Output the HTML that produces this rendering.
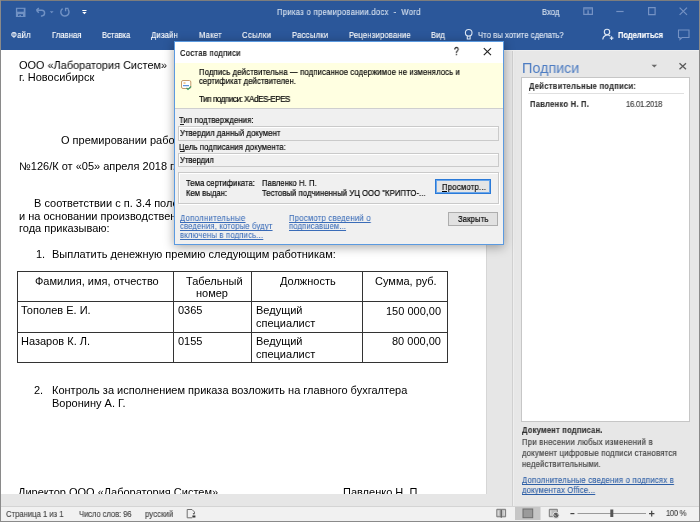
<!DOCTYPE html>
<html><head><meta charset="utf-8"><style>
html,body{margin:0;padding:0;width:700px;height:522px;overflow:hidden;position:relative;font-family:"Liberation Sans",sans-serif;-webkit-font-smoothing:antialiased;}
.t{will-change:transform;}
body div{position:absolute;}
.t{white-space:nowrap;transform-origin:0 50%;}
</style></head><body>
<div style="left:0px;top:0px;width:700px;height:522px;background:#e6e6e6"></div>
<div style="left:0px;top:0px;width:700px;height:50px;background:#2b579a"></div>
<div style="left:0px;top:0px;width:700px;height:1px;background:#7d7d7d"></div>
<div style="left:0px;top:0px;width:1px;height:522px;background:#8a8a8a"></div>
<div style="left:699px;top:0px;width:1px;height:522px;background:#8a8a8a"></div>
<div style="left:1px;top:50px;width:485px;height:444px;background:#fff"></div>
<div style="left:486px;top:50px;width:1px;height:444px;background:#d6d6d6"></div>
<div style="left:512px;top:50px;width:187px;height:456px;background:#e7e7e7"></div>
<div style="left:513px;top:50px;width:1px;height:456px;background:#eeeeee"></div>
<div style="left:512px;top:50px;width:1px;height:456px;background:#d0d0d0"></div>
<div style="left:487px;top:50px;width:212px;height:1px;background:#efefef"></div>
<div style="left:1px;top:506px;width:698px;height:15px;background:#f1f1f1"></div>
<div style="left:1px;top:506px;width:698px;height:1px;background:#d4d4d4"></div>
<div style="left:0px;top:521px;width:700px;height:1px;background:#8a8a8a"></div>
<div style="left:0px;top:520.5px;width:700px;height:1px;background:rgba(138,138,138,0.4)"></div>
<div class="t" style="left:277.3px;top:6.88px;font-size:9px;line-height:11px;color:#d6e0ee;letter-spacing:0.363px;transform:scaleX(0.8500);white-space:pre;-webkit-text-stroke:0.130px #d6e0ee;">Приказ о премировании.docx  -  Word</div>
<div class="t" style="left:541.7px;top:6.68px;font-size:9px;line-height:11px;color:#d6e0ee;letter-spacing:0.028px;transform:scaleX(0.8500);-webkit-text-stroke:0.130px #d6e0ee;">Вход</div>
<div class="t" style="left:11.1px;top:30.08px;font-size:9px;line-height:11px;color:#fff;letter-spacing:0.292px;transform:scaleX(0.8500);-webkit-text-stroke:0.156px #fff;">Файл</div>
<div class="t" style="left:51.9px;top:30.08px;font-size:9px;line-height:11px;color:#fff;letter-spacing:0.064px;transform:scaleX(0.8500);-webkit-text-stroke:0.156px #fff;">Главная</div>
<div class="t" style="left:102.1px;top:30.08px;font-size:9px;line-height:11px;color:#fff;letter-spacing:-0.039px;transform:scaleX(0.8500);-webkit-text-stroke:0.156px #fff;">Вставка</div>
<div class="t" style="left:150.9px;top:30.08px;font-size:9px;line-height:11px;color:#fff;letter-spacing:0.252px;transform:scaleX(0.8500);-webkit-text-stroke:0.156px #fff;">Дизайн</div>
<div class="t" style="left:198.7px;top:30.08px;font-size:9px;line-height:11px;color:#fff;letter-spacing:0.270px;transform:scaleX(0.8500);-webkit-text-stroke:0.156px #fff;">Макет</div>
<div class="t" style="left:242px;top:30.08px;font-size:9px;line-height:11px;color:#fff;letter-spacing:0.445px;transform:scaleX(0.8500);-webkit-text-stroke:0.156px #fff;">Ссылки</div>
<div class="t" style="left:291.7px;top:30.08px;font-size:9px;line-height:11px;color:#fff;letter-spacing:0.304px;transform:scaleX(0.8500);-webkit-text-stroke:0.156px #fff;">Рассылки</div>
<div class="t" style="left:349.3px;top:30.08px;font-size:9px;line-height:11px;color:#fff;letter-spacing:0.229px;transform:scaleX(0.8500);-webkit-text-stroke:0.156px #fff;">Рецензирование</div>
<div class="t" style="left:431.4px;top:30.08px;font-size:9px;line-height:11px;color:#fff;letter-spacing:-0.016px;transform:scaleX(0.8500);-webkit-text-stroke:0.156px #fff;">Вид</div>
<div class="t" style="left:477.5px;top:30.08px;font-size:9px;line-height:11px;color:#e0e8f4;letter-spacing:0.066px;transform:scaleX(0.8500);-webkit-text-stroke:0.156px #e0e8f4;">Что вы хотите сделать?</div>
<div class="t" style="left:617.9px;top:29.78px;font-size:9px;line-height:11px;color:#fff;font-weight:bold;letter-spacing:-0.119px;transform:scaleX(0.8500);-webkit-text-stroke:0.130px #fff;">Поделиться</div>
<div class="t" style="left:18.5px;top:58.99px;font-size:11px;line-height:13px;color:#000;transform:scaleX(0.9920);">ООО «Лаборатория Систем»</div>
<div class="t" style="left:18.5px;top:71.29px;font-size:11px;line-height:13px;color:#000;">г. Новосибирск</div>
<div class="t" style="left:61px;top:134.09px;font-size:11px;line-height:13px;color:#000;">О премировании работников</div>
<div class="t" style="left:18.5px;top:159.69px;font-size:11px;line-height:13px;color:#000;">№126/К от «05» апреля 2018 г.</div>
<div class="t" style="left:34.3px;top:197.29px;font-size:11px;line-height:13px;color:#000;">В соответствии с п. 3.4 положения о премировании</div>
<div class="t" style="left:18.5px;top:209.89px;font-size:11px;line-height:13px;color:#000;">и на основании производственных показателей за март 2018</div>
<div class="t" style="left:18.5px;top:221.99px;font-size:11px;line-height:13px;color:#000;">года приказываю:</div>
<div class="t" style="left:35.6px;top:247.69px;font-size:11px;line-height:13px;color:#000;">1.</div>
<div class="t" style="left:52px;top:247.69px;font-size:11px;line-height:13px;color:#000;">Выплатить денежную премию следующим работникам:</div>
<div style="left:17px;top:271px;width:431px;height:92px;border:1px solid #333;box-sizing:border-box"></div>
<div style="left:173px;top:271px;width:1px;height:92px;background:#333"></div>
<div style="left:251px;top:271px;width:1px;height:92px;background:#333"></div>
<div style="left:362px;top:271px;width:1px;height:92px;background:#333"></div>
<div style="left:17px;top:301px;width:431px;height:1px;background:#333"></div>
<div style="left:17px;top:332px;width:431px;height:1px;background:#333"></div>
<div class="t" style="left:34.6px;top:274.79px;font-size:11px;line-height:13px;color:#000;">Фамилия, имя, отчество</div>
<div class="t" style="left:185.7px;top:274.79px;font-size:11px;line-height:13px;color:#000;">Табельный</div>
<div class="t" style="left:196px;top:287.19px;font-size:11px;line-height:13px;color:#000;">номер</div>
<div class="t" style="left:279.8px;top:274.79px;font-size:11px;line-height:13px;color:#000;">Должность</div>
<div class="t" style="left:375px;top:274.79px;font-size:11px;line-height:13px;color:#000;">Сумма, руб.</div>
<div class="t" style="left:20.8px;top:303.69px;font-size:11px;line-height:13px;color:#000;">Тополев Е. И.</div>
<div class="t" style="left:177.6px;top:303.69px;font-size:11px;line-height:13px;color:#000;">0365</div>
<div class="t" style="left:255.7px;top:303.69px;font-size:11px;line-height:13px;color:#000;">Ведущий</div>
<div class="t" style="left:255.7px;top:316.69px;font-size:11px;line-height:13px;color:#000;">специалист</div>
<div class="t" style="right:258.7px;top:305.39px;font-size:11px;line-height:12px">150 000,00</div>
<div class="t" style="left:20.8px;top:334.89px;font-size:11px;line-height:13px;color:#000;">Назаров К. Л.</div>
<div class="t" style="left:177.6px;top:334.89px;font-size:11px;line-height:13px;color:#000;">0155</div>
<div class="t" style="left:255.7px;top:334.89px;font-size:11px;line-height:13px;color:#000;">Ведущий</div>
<div class="t" style="left:255.7px;top:347.69px;font-size:11px;line-height:13px;color:#000;">специалист</div>
<div class="t" style="right:258.7px;top:335.19px;font-size:11px;line-height:12px">80 000,00</div>
<div class="t" style="left:34.4px;top:384.29px;font-size:11px;line-height:13px;color:#000;">2.</div>
<div class="t" style="left:51.6px;top:384.29px;font-size:11px;line-height:13px;color:#000;">Контроль за исполнением приказа возложить на главного бухгалтера</div>
<div class="t" style="left:51.6px;top:396.79px;font-size:11px;line-height:13px;color:#000;">Воронину А. Г.</div>
<div style="left:1px;top:480px;width:485px;height:14px;overflow:hidden">
<div class="t" style="left:16.6px;top:6.39px;font-size:11px;line-height:13px;color:#000;">Директор ООО «Лаборатория Систем»</div>
<div class="t" style="left:341.8px;top:6.39px;font-size:11px;line-height:13px;color:#000;">Павленко Н. П.</div>
</div>
<div class="t" style="left:522.3px;top:60.48px;font-size:14.5px;line-height:17px;color:#4d7cc2;transform:scaleX(0.9891);">Подписи</div>
<div style="left:521px;top:77px;width:169px;height:345px;background:#fff;border:1px solid #c6c6c6;box-sizing:border-box"></div>
<div class="t" style="left:528.7px;top:80.58px;font-size:9px;line-height:11px;color:#333;font-weight:bold;letter-spacing:0.272px;transform:scaleX(0.8500);-webkit-text-stroke:0.130px #333;">Действительные подписи:</div>
<div style="left:528px;top:93px;width:156px;height:1px;background:#e0e0e0"></div>
<div class="t" style="left:529.5px;top:98.68px;font-size:9px;line-height:11px;color:#333;font-weight:bold;letter-spacing:0.259px;transform:scaleX(0.8500);-webkit-text-stroke:0.130px #333;">Павленко Н. П.</div>
<div class="t" style="left:626.2px;top:98.68px;font-size:9px;line-height:11px;color:#444;letter-spacing:-0.246px;transform:scaleX(0.8500);-webkit-text-stroke:0.195px #444;">16.01.2018</div>
<div class="t" style="left:522.2px;top:424.68px;font-size:9px;line-height:11px;color:#333;font-weight:bold;letter-spacing:0.214px;transform:scaleX(0.8500);-webkit-text-stroke:0.130px #333;">Документ подписан.</div>
<div class="t" style="left:522.2px;top:437.48px;font-size:9px;line-height:11px;color:#444;letter-spacing:0.336px;transform:scaleX(0.8500);-webkit-text-stroke:0.195px #444;">При внесении любых изменений в</div>
<div class="t" style="left:522.2px;top:447.78px;font-size:9px;line-height:11px;color:#444;letter-spacing:0.305px;transform:scaleX(0.8500);-webkit-text-stroke:0.195px #444;">документ цифровые подписи становятся</div>
<div class="t" style="left:522.2px;top:458.68px;font-size:9px;line-height:11px;color:#444;letter-spacing:0.312px;transform:scaleX(0.8500);-webkit-text-stroke:0.195px #444;">недействительными.</div>
<div class="t" style="left:522.2px;top:474.88px;font-size:9px;line-height:11px;color:#2e5fa6;letter-spacing:0.277px;transform:scaleX(0.8500);text-decoration:underline;text-decoration-skip-ink:none;text-decoration-thickness:0.9px;text-underline-offset:0.6px;-webkit-text-stroke:0.130px #2e5fa6;">Дополнительные сведения о подписях в</div>
<div class="t" style="left:522.2px;top:484.98px;font-size:9px;line-height:11px;color:#2e5fa6;letter-spacing:0.225px;transform:scaleX(0.8500);text-decoration:underline;text-decoration-skip-ink:none;text-decoration-thickness:0.9px;text-underline-offset:0.6px;-webkit-text-stroke:0.130px #2e5fa6;">документах Office...</div>
<div class="t" style="left:6px;top:508.68px;font-size:9px;line-height:11px;color:#444;letter-spacing:0.021px;transform:scaleX(0.8500);-webkit-text-stroke:0.130px #444;">Страница 1 из 1</div>
<div class="t" style="left:78.6px;top:508.68px;font-size:9px;line-height:11px;color:#444;letter-spacing:-0.091px;transform:scaleX(0.8500);-webkit-text-stroke:0.130px #444;">Число слов: 96</div>
<div class="t" style="left:144.6px;top:508.68px;font-size:9px;line-height:11px;color:#444;letter-spacing:0.176px;transform:scaleX(0.8500);-webkit-text-stroke:0.130px #444;">русский</div>
<div class="t" style="left:666px;top:508.18px;font-size:9px;line-height:11px;color:#444;letter-spacing:-0.398px;transform:scaleX(0.8500);-webkit-text-stroke:0.130px #444;">100 %</div>
<div style="box-shadow:0 2px 10px rgba(0,0,0,0.35);left:174px;top:41px;width:330px;height:204px;background:#f0f0f0;border:1px solid #5b9ae0;box-sizing:border-box"></div>
<div style="left:175px;top:42px;width:328px;height:21px;background:#fff"></div>
<div style="left:175px;top:63px;width:328px;height:45px;background:#ffffe1"></div>
<div style="left:175px;top:108px;width:328px;height:1px;background:#cfcfcf"></div>
<div class="t" style="left:179.7px;top:47.58px;font-size:9px;line-height:11px;color:#000;letter-spacing:0.338px;transform:scaleX(0.8500);-webkit-text-stroke:0.195px #000;">Состав подписи</div>
<div class="t" style="left:453.9px;top:45.63px;font-size:10px;line-height:12px;color:#222;transform:scaleX(0.8630);-webkit-text-stroke:0.325px #222;">?</div>
<div class="t" style="left:199.3px;top:67.18px;font-size:9px;line-height:11px;color:#000;letter-spacing:0.188px;transform:scaleX(0.8500);-webkit-text-stroke:0.195px #000;">Подпись действительна — подписанное содержимое не изменялось и</div>
<div class="t" style="left:199.3px;top:75.98px;font-size:9px;line-height:11px;color:#000;letter-spacing:0.104px;transform:scaleX(0.8500);-webkit-text-stroke:0.195px #000;">сертификат действителен.</div>
<div class="t" style="left:199.3px;top:94.15px;font-size:8.5px;line-height:10px;color:#000;letter-spacing:-0.471px;transform:scaleX(0.9500);-webkit-text-stroke:0.195px #000;">Тип подписи: XAdES-EPES</div>
<div class="t" style="left:179.2px;top:115.18px;font-size:9px;line-height:11px;color:#000;letter-spacing:0.172px;transform:scaleX(0.8500);-webkit-text-stroke:0.195px #000;">Тип подтверждения:</div>
<div style="left:179.6px;top:124.4px;width:4.6px;height:0.9px;background:#222"></div>
<div style="left:178px;top:126px;width:321px;height:15px;background:#f0f0f0;border:1px solid #cacaca;box-shadow:inset 1px 1px 0 #fff;box-sizing:border-box"></div>
<div class="t" style="left:180.4px;top:128.48px;font-size:9px;line-height:11px;color:#000;letter-spacing:0.113px;transform:scaleX(0.8500);-webkit-text-stroke:0.195px #000;">Утвердил данный документ</div>
<div class="t" style="left:179.2px;top:142.28px;font-size:9px;line-height:11px;color:#000;letter-spacing:0.153px;transform:scaleX(0.8500);-webkit-text-stroke:0.195px #000;">Цель подписания документа:</div>
<div style="left:179.6px;top:151.4px;width:4.8px;height:0.9px;background:#222"></div>
<div style="left:178px;top:153px;width:321px;height:14px;background:#f0f0f0;border:1px solid #cacaca;box-shadow:inset 1px 1px 0 #fff;box-sizing:border-box"></div>
<div class="t" style="left:180.4px;top:154.68px;font-size:9px;line-height:11px;color:#000;letter-spacing:-0.026px;transform:scaleX(0.8500);-webkit-text-stroke:0.195px #000;">Утвердил</div>
<div style="left:178px;top:172px;width:321px;height:32px;border:1px solid #cacaca;box-shadow:inset 1px 1px 0 #fff, 1px 1px 0 #fff;box-sizing:border-box"></div>
<div class="t" style="left:186px;top:177.68px;font-size:9px;line-height:11px;color:#000;letter-spacing:0.066px;transform:scaleX(0.8500);-webkit-text-stroke:0.195px #000;">Тема сертификата:</div>
<div class="t" style="left:262.4px;top:177.68px;font-size:9px;line-height:11px;color:#000;letter-spacing:0.076px;transform:scaleX(0.8500);-webkit-text-stroke:0.195px #000;">Павленко Н. П.</div>
<div class="t" style="left:186px;top:188.08px;font-size:9px;line-height:11px;color:#000;letter-spacing:0.032px;transform:scaleX(0.8500);-webkit-text-stroke:0.195px #000;">Кем выдан:</div>
<div class="t" style="left:262.4px;top:188.08px;font-size:9px;line-height:11px;color:#000;letter-spacing:0.084px;transform:scaleX(0.8500);-webkit-text-stroke:0.195px #000;">Тестовый подчиненный УЦ ООО "КРИПТО-...</div>
<div style="left:435px;top:179px;width:56px;height:15px;background:#e5e5e5;border:1px solid #2a7ad8;box-shadow:inset 0 0 0 1px #6aa6ea;box-sizing:border-box"></div>
<div style="left:442.3px;top:191px;width:4.6px;height:0.8px;background:#000"></div>
<div class="t" style="left:441.5px;top:181.58px;font-size:9px;line-height:11px;color:#000;letter-spacing:0.309px;transform:scaleX(0.8500);-webkit-text-stroke:0.195px #000;">Просмотр...</div>
<div style="left:448px;top:212px;width:50px;height:14px;background:#e1e1e1;border:1px solid #adadad;box-sizing:border-box"></div>
<div class="t" style="left:457.6px;top:214.38px;font-size:9px;line-height:11px;color:#000;letter-spacing:0.157px;transform:scaleX(0.8500);-webkit-text-stroke:0.195px #000;">Закрыть</div>
<div class="t" style="left:179.8px;top:212.58px;font-size:9px;line-height:11px;color:#3a6cb8;letter-spacing:0.415px;transform:scaleX(0.8500);text-decoration:underline;text-decoration-skip-ink:none;text-decoration-thickness:0.9px;text-underline-offset:0.6px;-webkit-text-stroke:0.065px #3a6cb8;">Дополнительные</div>
<div class="t" style="left:179.8px;top:221.08px;font-size:9px;line-height:11px;color:#3a6cb8;letter-spacing:0.210px;transform:scaleX(0.8500);text-decoration:underline;text-decoration-skip-ink:none;text-decoration-thickness:0.9px;text-underline-offset:0.6px;-webkit-text-stroke:0.065px #3a6cb8;">сведения, которые будут</div>
<div class="t" style="left:179.8px;top:229.58px;font-size:9px;line-height:11px;color:#3a6cb8;letter-spacing:0.235px;transform:scaleX(0.8500);text-decoration:underline;text-decoration-skip-ink:none;text-decoration-thickness:0.9px;text-underline-offset:0.6px;-webkit-text-stroke:0.065px #3a6cb8;">включены в подпись...</div>
<div class="t" style="left:288.8px;top:212.58px;font-size:9px;line-height:11px;color:#3a6cb8;letter-spacing:0.308px;transform:scaleX(0.8500);text-decoration:underline;text-decoration-skip-ink:none;text-decoration-thickness:0.9px;text-underline-offset:0.6px;-webkit-text-stroke:0.065px #3a6cb8;">Просмотр сведений о</div>
<div class="t" style="left:288.8px;top:221.08px;font-size:9px;line-height:11px;color:#3a6cb8;letter-spacing:0.145px;transform:scaleX(0.8500);text-decoration:underline;text-decoration-skip-ink:none;text-decoration-thickness:0.9px;text-underline-offset:0.6px;-webkit-text-stroke:0.065px #3a6cb8;">подписавшем...</div>
<svg style="position:absolute;left:0;top:0" width="700" height="522" viewBox="0 0 700 522">
<g fill="none" stroke="#7091c4" stroke-width="1.25">
 <path d="M36.4 10.3l2.4 -2.4M36.4 10.3l2.4 2.4M36.6 10.3h5.2a2.8 2.8 0 0 1 0 5.6h-0.9" stroke-width="1.45"/>
 <path d="M62.6 8.6a4.1 4.1 0 1 0 5.3 0.6" stroke-width="1.45"/>
 <path d="M65 8.4h3.5M65.6 8.2v3" stroke-width="1.3"/>
</g>
<path d="M49.8 11.3h3.8l-1.9 1.9z" fill="#7091c4"/>
<rect x="15.9" y="7.75" width="9.6" height="9.25" fill="#7091c4"/>
<rect x="17.25" y="8.9" width="6.5" height="2.8" fill="#2b579a"/>
<rect x="18.1" y="14.2" width="4.9" height="1.8" fill="#2b579a"/>
<rect x="19.4" y="15.1" width="1.6" height="1.9" fill="#7091c4"/>
<path d="M82.3 10h4.2v1h-4.2z M82.2 12h4.4l-2.2 2.3z" fill="#fff"/>
<g fill="none" stroke="#7592c4" stroke-width="1.2">
 <path d="M583.8 7.8h8.6v6.5h-8.6z"/>
 <path d="M584.5 9h7.2" stroke-width="0.8"/>
 <path d="M588.1 10.3v4" stroke-width="1.4"/>
 <path d="M616.3 11.5h7.3"/>
 <path d="M648.6 7.7h6.5v6.9h-6.5z"/>
 <path d="M679.6 7.6l7.4 7.3M687 7.6l-7.4 7.3"/>
</g>
<g fill="none" stroke="#dce6f3" stroke-width="1.1">
 <circle cx="468.7" cy="32.8" r="3.3"/>
 <path d="M467.3 36v3h2.8v-3"/>
 <circle cx="607" cy="32" r="2.7"/>
 <path d="M602.8 39.5a4.5 4.5 0 0 1 7.5 -3.3"/>
 <path d="M611.6 36.3v3.6M609.8 38.1h3.6"/>
</g>
<g fill="none" stroke="#7592c4" stroke-width="1.1">
 <path d="M678.5 30h10.5v7.5h-7l-2 2v-2h-1.5z"/>
</g>
<g fill="none" stroke="#5a5a5a" stroke-width="1.3">
 <path d="M679.5 63.2l6.5 6M686 63.2l-6.5 6"/>
</g>
<path d="M651.5 64.8h5.6l-2.8 2.8z" fill="#6a6a6a"/>
<g fill="none" stroke="#222" stroke-width="1.15">
 <path d="M483.8 48.2l7.2 7M491 48.2l-7.2 7"/>
</g>
<g fill="none" stroke="#707070" stroke-width="1">
 <path d="M194.5 513v-1l-2.5 -2.5h-4.8v8.3h5"/>
</g>
<path d="M192.6 513.3h2.6l-1.3 1.4z M192.4 515.6h3v2h-3z" fill="#333"/>
<g stroke="#7a7a7a" stroke-width="1">
 <path d="M496.8 509.3h4.5v7.5h-4.5z" fill="#bdbdbd"/>
 <path d="M501.3 509.3h4.3v7.5h-4.3z" fill="#bdbdbd"/>
 <path d="M549.3 509.3h8v7.4h-8z" fill="#bdbdbd"/>
</g>
<path d="M498.2 510.5v5M504.2 510.5v5M550.8 510.5v5" stroke="#e6e6e6" stroke-width="0.9"/>
<path d="M501.3 510v7.7" stroke="#666" stroke-width="1.2"/>
<circle cx="556" cy="515.2" r="3.1" fill="#5e5e5e" stroke="#f1f1f1" stroke-width="0.9"/>
<path d="M554.2 514.5l1.5 1.8M557.2 513.8l0.9 0.5" stroke="#ddd" stroke-width="0.9"/>
<rect x="515" y="507" width="25.5" height="13" fill="#c6c6c6"/>
<rect x="523" y="509" width="9.7" height="8.7" fill="#9a9a9a" stroke="#6d6d6d" stroke-width="1"/>
<path d="M570.4 513.6h4" stroke="#444" stroke-width="1.2"/>
<path d="M577.5 513.5h68.5" stroke="#9a9a9a" stroke-width="1"/>
<rect x="610.3" y="509.5" width="3" height="7.5" fill="#555"/>
<path d="M649 513.6h5.4M651.7 510.8v5.6" stroke="#444" stroke-width="1.2"/>
<g>
 <rect x="181.5" y="80.5" width="9.3" height="8" rx="1.5" fill="#fff" stroke="#c49a6c" stroke-width="1"/>
 <path d="M183.5 83h2" stroke="#e59a3a" stroke-width="1"/>
 <path d="M183 85.7h6" stroke="#3a7bd5" stroke-width="1"/>
 <path d="M186.5 88l1.5 1.5 3 -3" stroke="#3a9a6a" stroke-width="1.1" fill="none"/>
</g>
</svg>
</body></html>
